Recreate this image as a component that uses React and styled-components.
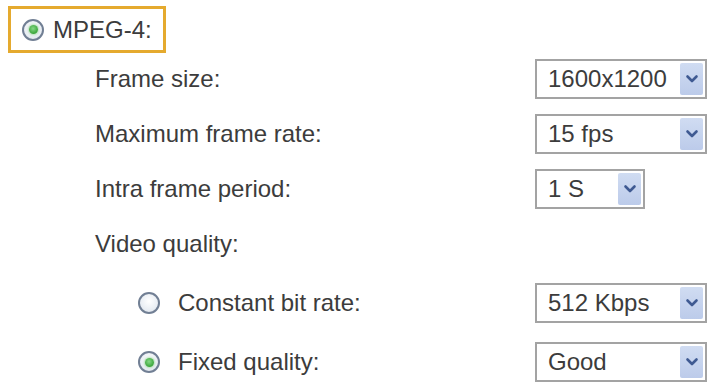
import React from "react";
import styled, { createGlobalStyle } from "styled-components";

const Global = createGlobalStyle`
  html, body { margin: 0; padding: 0; background: #ffffff; }
  body { font-family: "Liberation Sans", Arial, sans-serif; color: #3c3c3c; }
  * { box-sizing: border-box; }
`;

const Page = styled.div`
  width: 712px;
  height: 382px;
  overflow: hidden;
  padding: 6px 0 0 8px;
  display: flex;
  flex-direction: column;
`;

const Highlight = styled.div`
  width: 158px;
  height: 49px;
  border: 3px solid #e5aa2e;
  display: flex;
  align-items: center;
  padding-left: 11px;
  gap: 9px;
  font-size: 24px;
  color: #3c3c3c;
`;

const Form = styled.div`
  margin-top: 6px;
  padding-left: 87px;
  display: flex;
  flex-direction: column;
  gap: 15px;
`;

const Row = styled.div`
  height: 40px;
  display: flex;
  align-items: center;
`;

const Label = styled.div`
  width: ${(p) => p.$width || 440}px;
  font-size: 24px;
  line-height: 1;
  color: #3c3c3c;
  white-space: nowrap;
  display: flex;
  align-items: center;
  gap: 18px;
`;

const SubGroup = styled.div`
  margin-top: 4px;
  padding-left: 43px;
  display: flex;
  flex-direction: column;
  gap: 19px;
`;

const Radio = styled.span`
  flex: none;
  width: 22px;
  height: 22px;
  border-radius: 50%;
  border: 2px solid #717f94;
  background: radial-gradient(circle at 50% 40%, #ffffff 0%, #e8edf3 65%, #d2dae4 100%);
  display: flex;
  align-items: center;
  justify-content: center;
  &::after {
    content: "";
    width: 9px;
    height: 9px;
    border-radius: 50%;
    background: radial-gradient(circle at 45% 40%, #86d886 0%, #3aa63a 70%, #2f8f2f 100%);
    box-shadow: 0 0 2px 1px rgba(140, 210, 140, 0.6);
    display: ${(p) => (p.$checked ? "block" : "none")};
  }
`;

const Select = styled.div`
  width: ${(p) => p.$width}px;
  height: 40px;
  border: 2px solid #a3a3a3;
  background: #ffffff;
  display: flex;
  align-items: stretch;
  padding: 2px;
`;

const Value = styled.div`
  flex: 1;
  display: flex;
  align-items: center;
  padding-left: 9px;
  font-size: 24px;
  color: #3c3c3c;
  white-space: nowrap;
`;

const ArrowButton = styled.div`
  width: 23px;
  flex: none;
  background: linear-gradient(180deg, #d0dcf2 0%, #bccbea 100%);
  border-radius: 2px;
  display: flex;
  align-items: center;
  justify-content: center;
`;

const Chevron = () => (
  <svg width="14" height="10" viewBox="0 0 14 10">
    <path d="M2.5 2.5 L7 7 L11.5 2.5" fill="none" stroke="#3f5a92" strokeWidth="2.6" strokeLinecap="round" strokeLinejoin="round" />
  </svg>
);

const Dropdown = ({ value, width = 172 }) => (
  <Select $width={width}>
    <Value>{value}</Value>
    <ArrowButton>
      <Chevron />
    </ArrowButton>
  </Select>
);

export default function App() {
  return (
    <>
      <Global />
      <Page>
        <Highlight>
          <Radio $checked />
          <span>MPEG-4:</span>
        </Highlight>
        <Form>
          <Row>
            <Label>Frame size:</Label>
            <Dropdown value="1600x1200" />
          </Row>
          <Row>
            <Label>Maximum frame rate:</Label>
            <Dropdown value="15 fps" />
          </Row>
          <Row>
            <Label>Intra frame period:</Label>
            <Dropdown value="1 S" width={110} />
          </Row>
          <Row>
            <Label>Video quality:</Label>
          </Row>
          <SubGroup>
            <Row>
              <Label $width={397}>
                <Radio />
                <span>Constant bit rate:</span>
              </Label>
              <Dropdown value="512 Kbps" />
            </Row>
            <Row>
              <Label $width={397}>
                <Radio $checked />
                <span>Fixed quality:</span>
              </Label>
              <Dropdown value="Good" />
            </Row>
          </SubGroup>
        </Form>
      </Page>
    </>
  );
}
